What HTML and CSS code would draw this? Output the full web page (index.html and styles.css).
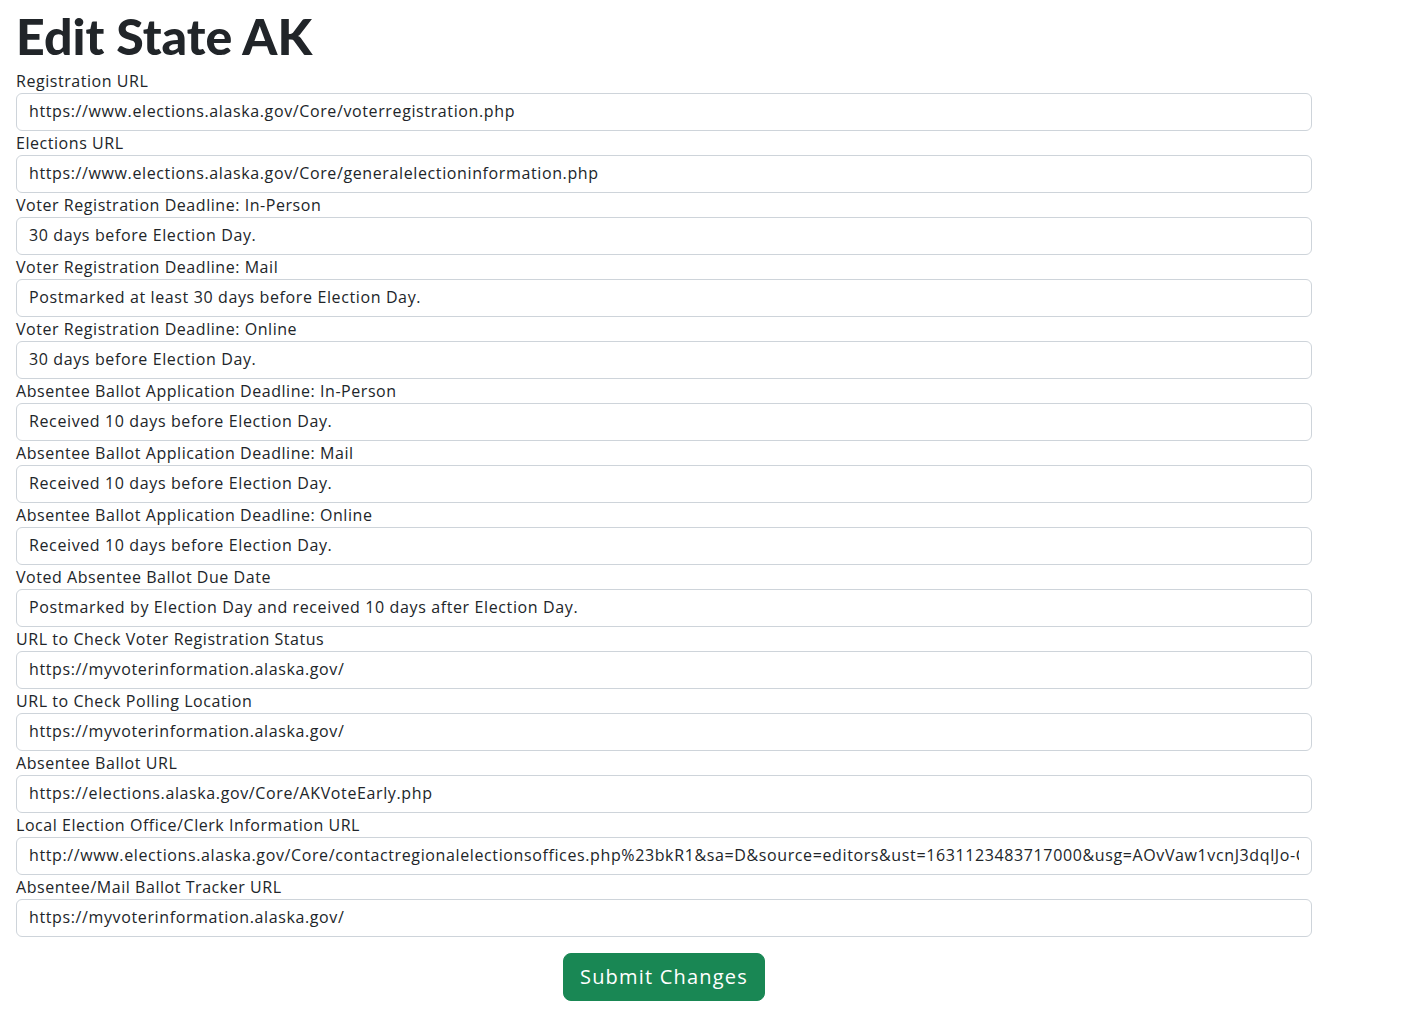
FILE: index.html
```html
<!DOCTYPE html>
<html lang="en">
<head>
<meta charset="utf-8">
<title>Edit State AK</title>
<link rel="stylesheet" href="styles.css">
</head>
<body>
<main class="page">
  <h1 class="title">Edit State AK</h1>
  <form class="form">
    <div class="field"><label class="label">Registration URL</label><input class="control" value="https://www.elections.alaska.gov/Core/voterregistration.php"></div>
    <div class="field"><label class="label">Elections URL</label><input class="control" value="https://www.elections.alaska.gov/Core/generalelectioninformation.php"></div>
    <div class="field"><label class="label">Voter Registration Deadline: In-Person</label><input class="control" value="30 days before Election Day."></div>
    <div class="field"><label class="label">Voter Registration Deadline: Mail</label><input class="control" value="Postmarked at least 30 days before Election Day."></div>
    <div class="field"><label class="label">Voter Registration Deadline: Online</label><input class="control" value="30 days before Election Day."></div>
    <div class="field"><label class="label">Absentee Ballot Application Deadline: In-Person</label><input class="control" value="Received 10 days before Election Day."></div>
    <div class="field"><label class="label">Absentee Ballot Application Deadline: Mail</label><input class="control" value="Received 10 days before Election Day."></div>
    <div class="field"><label class="label">Absentee Ballot Application Deadline: Online</label><input class="control" value="Received 10 days before Election Day."></div>
    <div class="field"><label class="label">Voted Absentee Ballot Due Date</label><input class="control" value="Postmarked by Election Day and received 10 days after Election Day."></div>
    <div class="field"><label class="label">URL to Check Voter Registration Status</label><input class="control" value="https://myvoterinformation.alaska.gov/"></div>
    <div class="field"><label class="label">URL to Check Polling Location</label><input class="control" value="https://myvoterinformation.alaska.gov/"></div>
    <div class="field"><label class="label">Absentee Ballot URL</label><input class="control" value="https://elections.alaska.gov/Core/AKVoteEarly.php"></div>
    <div class="field"><label class="label">Local Election Office/Clerk Information URL</label><input class="control" value="http://www.elections.alaska.gov/Core/contactregionalelectionsoffices.php%23bkR1&amp;sa=D&amp;source=editors&amp;ust=1631123483717000&amp;usg=AOvVaw1vcnJ3dqlJo-C"></div>
    <div class="field"><label class="label">Absentee/Mail Ballot Tracker URL</label><input class="control" value="https://myvoterinformation.alaska.gov/"></div>
    <div class="actions"><button type="button" class="btn">Submit Changes</button></div>
  </form>
</main>
</body>
</html>
```
FILE: styles.css
```css
* { box-sizing: border-box; }
html, body { margin: 0; padding: 0; background: #fff; }
body {
  font-family: "Open Sans", "DejaVu Sans", sans-serif;
  font-size: 16px;
  line-height: 24px;
  letter-spacing: 0.55px;
  color: #212529;
}
.page {
  width: 1328px;
  padding: 0 16px;
}
.title {
  margin: 0;
  padding-top: 4px;
  font-family: "Lato", "DejaVu Sans", sans-serif;
  font-weight: 900;
  font-size: 50px;
  line-height: 65px;
  letter-spacing: 0;
  color: #212529;
}
.form { display: flex; flex-direction: column; }
.field { display: flex; flex-direction: column; }
.label { display: block; height: 24px; }
.control {
  display: block;
  width: 100%;
  height: 38px;
  padding: 5px 12px 7px;
  font: inherit;
  letter-spacing: 0.62px;
  color: #212529;
  background: #fff;
  border: 1px solid #ced4da;
  border-radius: 6px;
  outline: none;
}
.actions {
  display: flex;
  justify-content: center;
  margin-top: 16px;
}
.btn {
  height: 48px;
  width: 202px;
  padding: 0;
  white-space: nowrap;
  font-family: inherit;
  font-size: 20px;
  line-height: 30px;
  letter-spacing: 1.2px;
  color: #fff;
  background: #198754;
  border: 1px solid #198754;
  border-radius: 8px;
}
```
